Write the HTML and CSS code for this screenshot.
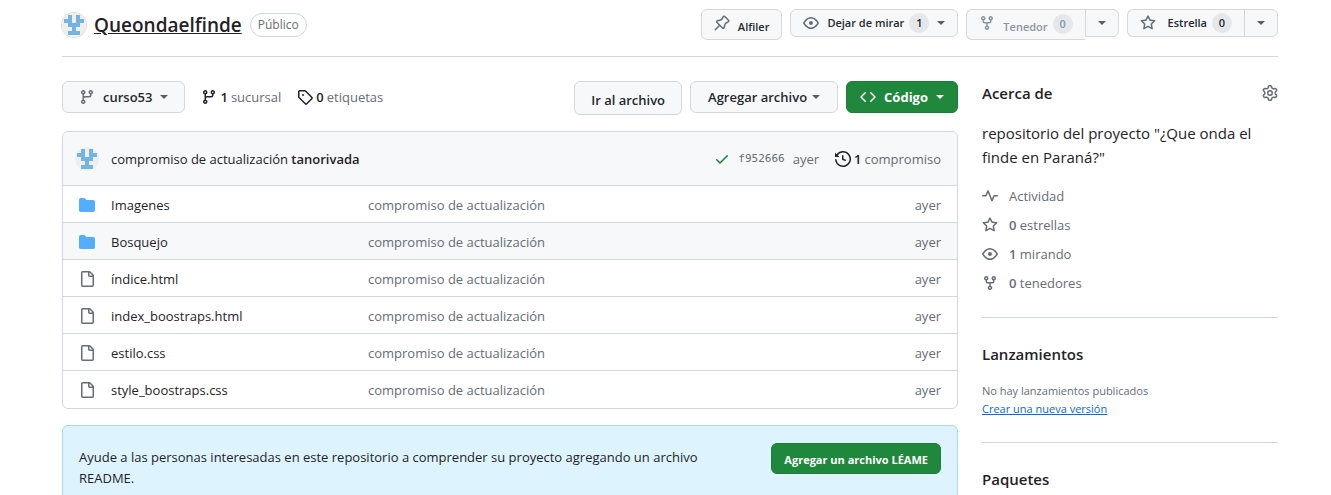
FILE: index.html
```html
<!DOCTYPE html>
<html lang="es">
<head>
<meta charset="utf-8">
<title>Queondaelfinde</title>
<link rel="stylesheet" href="styles.css">
</head>
<body>
<svg class="sprite" aria-hidden="true">
  <symbol id="fork" viewBox="0 0 16 16"><path d="M5 5.372v.878c0 .414.336.75.75.75h4.5a.75.75 0 0 0 .75-.75v-.878a2.25 2.25 0 1 1 1.5 0v.878a2.25 2.25 0 0 1-2.25 2.25h-1.5v2.128a2.251 2.251 0 1 1-1.5 0V8.5h-1.5A2.25 2.25 0 0 1 3.5 6.25v-.878a2.25 2.25 0 1 1 1.5 0ZM5 3.25a.75.75 0 1 0-1.5 0 .75.75 0 0 0 1.5 0Zm6.75.75a.75.75 0 1 0 0-1.5.75.75 0 0 0 0 1.5Zm-3 8.75a.75.75 0 1 0-1.5 0 .75.75 0 0 0 1.5 0Z"/></symbol>
  <symbol id="branch" viewBox="0 0 16 16"><path d="M9.5 3.25a2.25 2.25 0 1 1 3 2.122V6A2.5 2.5 0 0 1 10 8.5H6a1 1 0 0 0-1 1v1.128a2.251 2.251 0 1 1-1.5 0V5.372a2.25 2.25 0 1 1 1.5 0v1.836A2.493 2.493 0 0 1 6 7h4a1 1 0 0 0 1-1v-.628A2.25 2.25 0 0 1 9.5 3.25Zm-6 0a.75.75 0 1 0 1.5 0 .75.75 0 0 0-1.5 0Zm8.25-.75a.75.75 0 1 0 0 1.5.75.75 0 0 0 0-1.5ZM4.25 12a.75.75 0 1 0 0 1.5.75.75 0 0 0 0-1.5Z"/></symbol>
  <symbol id="tag" viewBox="0 0 16 16"><path d="M1 7.775V2.75C1 1.784 1.784 1 2.75 1h5.025c.464 0 .91.184 1.238.513l6.25 6.25a1.75 1.75 0 0 1 0 2.474l-5.026 5.026a1.75 1.75 0 0 1-2.474 0l-6.25-6.25A1.752 1.752 0 0 1 1 7.775Zm1.5 0c0 .066.026.13.073.177l6.25 6.25a.25.25 0 0 0 .354 0l5.025-5.025a.25.25 0 0 0 0-.354l-6.25-6.25a.25.25 0 0 0-.177-.073H2.75a.25.25 0 0 0-.25.25ZM6 5a1 1 0 1 1 0 2 1 1 0 0 1 0-2Z"/></symbol>
  <symbol id="eye" viewBox="0 0 16 16"><path d="M8 2c1.981 0 3.671.992 4.933 2.078 1.27 1.091 2.187 2.345 2.637 3.023a1.62 1.62 0 0 1 0 1.798c-.45.678-1.367 1.932-2.637 3.023C11.67 13.008 9.981 14 8 14c-1.981 0-3.671-.992-4.933-2.078C1.797 10.83.88 9.576.43 8.898a1.62 1.62 0 0 1 0-1.798c.45-.677 1.367-1.931 2.637-3.022C4.33 2.992 6.019 2 8 2ZM1.679 7.932a.12.12 0 0 0 0 .136c.411.622 1.241 1.75 2.366 2.717C5.176 11.758 6.527 12.5 8 12.5c1.473 0 2.825-.742 3.955-1.715 1.124-.967 1.954-2.096 2.366-2.717a.12.12 0 0 0 0-.136c-.412-.621-1.242-1.75-2.366-2.717C10.824 4.242 9.473 3.5 8 3.5c-1.473 0-2.825.742-3.955 1.715-1.124.967-1.954 2.096-2.366 2.717ZM8 10a2 2 0 1 1-.001-3.999A2 2 0 0 1 8 10Z"/></symbol>
  <symbol id="star" viewBox="0 0 16 16"><path d="M8 .25a.75.75 0 0 1 .673.418l1.882 3.815 4.21.612a.75.75 0 0 1 .416 1.279l-3.046 2.97.719 4.192a.751.751 0 0 1-1.088.791L8 12.347l-3.766 1.98a.75.75 0 0 1-1.088-.79l.72-4.194L.818 6.374a.75.75 0 0 1 .416-1.28l4.21-.611L7.327.668A.75.75 0 0 1 8 .25Zm0 2.445L6.615 5.5a.75.75 0 0 1-.564.41l-3.097.45 2.24 2.184a.75.75 0 0 1 .216.664l-.528 3.084 2.769-1.456a.75.75 0 0 1 .698 0l2.77 1.456-.53-3.084a.75.75 0 0 1 .216-.664l2.24-2.183-3.096-.45a.75.75 0 0 1-.564-.41L8 2.694Z"/></symbol>
  <symbol id="pin" viewBox="0 0 16 16"><path d="m11.294.984 3.722 3.722a1.75 1.75 0 0 1-.504 2.826l-1.327.613a3.089 3.089 0 0 0-1.707 2.084l-.584 2.454c-.317 1.332-1.972 1.8-2.94.832L5.75 11.311 1.78 15.28a.749.749 0 1 1-1.06-1.06l3.969-3.97-2.204-2.204c-.968-.968-.5-2.623.832-2.94l2.454-.584a3.08 3.08 0 0 0 2.084-1.707l.613-1.327a1.75 1.75 0 0 1 2.826-.504ZM6.283 9.723l2.732 2.731a.25.25 0 0 0 .42-.119l.584-2.454a4.586 4.586 0 0 1 2.537-3.098l1.328-.613a.25.25 0 0 0 .072-.404l-3.722-3.722a.25.25 0 0 0-.404.072l-.613 1.328a4.584 4.584 0 0 1-3.098 2.537l-2.454.584a.25.25 0 0 0-.119.42l2.731 2.732Z"/></symbol>
  <symbol id="code" viewBox="0 0 16 16"><path d="m11.28 3.22 4.25 4.25a.75.75 0 0 1 0 1.06l-4.25 4.25a.749.749 0 0 1-1.275-.326.749.749 0 0 1 .215-.734L13.94 8l-3.72-3.72a.749.749 0 0 1 .326-1.275.749.749 0 0 1 .734.215Zm-6.56 0a.751.751 0 0 1 1.042.018.751.751 0 0 1 .018 1.042L2.06 8l3.72 3.72a.749.749 0 0 1-.326 1.275.749.749 0 0 1-.734-.215L.47 8.53a.75.75 0 0 1 0-1.06Z"/></symbol>
  <symbol id="history" viewBox="0 0 16 16"><path d="m.427 1.927 1.215 1.215a8.002 8.002 0 1 1-1.6 5.685.75.75 0 1 1 1.493-.154 6.5 6.5 0 1 0 1.18-4.458l1.358 1.358A.25.25 0 0 1 3.896 6H.25A.25.25 0 0 1 0 5.75V2.104a.25.25 0 0 1 .427-.177ZM7.75 4a.75.75 0 0 1 .75.75v2.992l2.028.812a.75.75 0 0 1-.557 1.392l-2.5-1A.751.751 0 0 1 7 8.25v-3.5A.75.75 0 0 1 7.75 4Z"/></symbol>
  <symbol id="check" viewBox="0 0 16 16"><path d="M13.78 4.22a.75.75 0 0 1 0 1.06l-7.25 7.25a.75.75 0 0 1-1.06 0L2.22 9.28a.751.751 0 0 1 .018-1.042.751.751 0 0 1 1.042-.018L6 10.94l6.72-6.72a.75.75 0 0 1 1.06 0Z"/></symbol>
  <symbol id="folder" viewBox="0 0 16 16"><path d="M1.75 1A1.75 1.75 0 0 0 0 2.75v10.5C0 14.216.784 15 1.75 15h12.5A1.75 1.75 0 0 0 16 13.25v-8.5A1.75 1.75 0 0 0 14.25 3H7.5a.25.25 0 0 1-.2-.1l-.9-1.2C6.07 1.26 5.55 1 5 1H1.75Z"/></symbol>
  <symbol id="file" viewBox="0 0 16 16"><path d="M2 1.75C2 .784 2.784 0 3.75 0h6.586c.464 0 .909.184 1.237.513l2.914 2.914c.329.328.513.773.513 1.237v9.586A1.75 1.75 0 0 1 13.25 16h-9.5A1.75 1.75 0 0 1 2 14.25Zm1.75-.25a.25.25 0 0 0-.25.25v12.5c0 .138.112.25.25.25h9.5a.25.25 0 0 0 .25-.25V6h-2.75A1.75 1.75 0 0 1 9 4.25V1.5Zm6.75.062V4.25c0 .138.112.25.25.25h2.688l-.011-.013-2.914-2.914-.013-.011Z"/></symbol>
  <symbol id="pulse" viewBox="0 0 16 16"><path d="M6 2c.306 0 .582.187.696.471L10 10.731l1.304-3.26A.751.751 0 0 1 12 7h3.25a.75.75 0 0 1 0 1.5h-2.742l-1.812 4.528a.751.751 0 0 1-1.392 0L6 4.77 4.696 8.03A.75.75 0 0 1 4 8.5H.75a.75.75 0 0 1 0-1.5h2.742l1.812-4.529A.751.751 0 0 1 6 2Z"/></symbol>
  <symbol id="gear" viewBox="0 0 16 16"><path d="M8 0a8.2 8.2 0 0 1 .701.031C9.444.095 9.99.645 10.16 1.29l.288 1.107c.018.066.079.158.212.224.231.114.454.243.668.386.123.082.233.09.299.071l1.103-.303c.644-.176 1.392.021 1.82.63.27.385.506.792.704 1.218.315.675.111 1.422-.364 1.891l-.814.806c-.049.048-.098.147-.088.294.016.257.016.515 0 .772-.01.147.038.246.088.294l.814.806c.475.469.679 1.216.364 1.891a7.977 7.977 0 0 1-.704 1.217c-.428.61-1.176.807-1.82.63l-1.102-.302c-.067-.019-.177-.011-.3.071a5.909 5.909 0 0 1-.668.386c-.133.066-.194.158-.211.224l-.29 1.106c-.168.646-.715 1.196-1.458 1.26a8.006 8.006 0 0 1-1.402 0c-.743-.064-1.289-.614-1.458-1.26l-.289-1.106c-.018-.066-.079-.158-.212-.224a5.738 5.738 0 0 1-.668-.386c-.123-.082-.233-.09-.299-.071l-1.103.303c-.644.176-1.392-.021-1.82-.63a8.12 8.12 0 0 1-.704-1.218c-.315-.675-.111-1.422.363-1.891l.815-.806c.05-.048.098-.147.088-.294a6.214 6.214 0 0 1 0-.772c.01-.147-.038-.246-.088-.294l-.815-.806C.635 6.045.431 5.298.746 4.623a7.92 7.92 0 0 1 .704-1.217c.428-.61 1.176-.807 1.82-.63l1.102.302c.067.019.177.011.3-.071.214-.143.437-.272.668-.386.133-.066.194-.158.211-.224l.29-1.106C6.009.645 6.556.095 7.299.03 7.53.01 7.764 0 8 0Zm-.571 1.525c-.036.003-.108.036-.137.146l-.289 1.105c-.147.561-.549.967-.998 1.189-.173.086-.34.183-.5.29-.417.278-.97.423-1.529.27l-1.103-.303c-.109-.03-.175.016-.195.045-.22.312-.412.644-.573.99-.014.031-.021.11.059.19l.815.806c.411.406.562.957.53 1.456a4.709 4.709 0 0 0 0 .582c.032.499-.119 1.05-.53 1.456l-.815.806c-.081.08-.073.159-.059.19.162.346.353.677.573.989.02.03.085.076.195.046l1.102-.303c.56-.153 1.113-.008 1.53.27.161.107.328.204.501.29.447.222.85.629.997 1.189l.289 1.105c.029.109.101.143.137.146a6.6 6.6 0 0 0 1.142 0c.036-.003.108-.036.137-.146l.289-1.105c.147-.561.549-.967.998-1.189.173-.086.34-.183.5-.29.417-.278.97-.423 1.529-.27l1.103.303c.109.029.175-.016.195-.045.22-.313.411-.644.573-.99.014-.031.021-.11-.059-.19l-.815-.806c-.411-.406-.562-.957-.53-1.456a4.709 4.709 0 0 0 0-.582c-.032-.499.119-1.05.53-1.456l.815-.806c.081-.08.073-.159.059-.19a6.464 6.464 0 0 0-.573-.989c-.02-.03-.085-.076-.195-.046l-1.102.303c-.56.153-1.113.008-1.53-.27a4.44 4.44 0 0 0-.501-.29c-.447-.222-.85-.629-.997-1.189l-.289-1.105c-.029-.11-.101-.143-.137-.146a6.6 6.6 0 0 0-1.142 0ZM11 8a3 3 0 1 1-6 0 3 3 0 0 1 6 0ZM9.5 8a1.5 1.5 0 1 0-3.001.001A1.5 1.5 0 0 0 9.5 8Z"/></symbol>
  <symbol id="avatar" viewBox="0 0 24 24"><circle cx="12" cy="12" r="12" fill="#efefef"/><path fill="#73b5e0" d="M6 2h4v8h4V2h4v4h4v4h-4v4h-4v4h4v4H6v-4h4v-4H6v-4H2V6h4z"/></symbol>
</svg>

<header class="repo-head">
  <div class="repo-title">
    <svg class="avatar-large"><use href="#avatar"/></svg>
    <a class="repo-name" href="#">Queondaelfinde</a>
    <span class="label">Público</span>
  </div>
  <div class="actions">
    <button class="btn small tall"><svg class="icon"><use href="#pin"/></svg><span class="text">Alfiler</span></button>
    <button class="btn small"><svg class="icon"><use href="#eye"/></svg><span>Dejar de mirar</span><span class="counter">1</span><span class="caret"></span></button>
    <div class="split">
      <button class="btn small tall faded" disabled><svg class="icon"><use href="#fork"/></svg><span class="text">Tenedor</span><span class="counter">0</span></button>
      <button class="btn small drop" aria-label="Ver bifurcaciones"><span class="caret"></span></button>
    </div>
    <div class="split">
      <button class="btn small star-btn"><svg class="icon"><use href="#star"/></svg><span>Estrella</span><span class="counter">0</span></button>
      <button class="btn small drop" aria-label="Listas"><span class="caret"></span></button>
    </div>
  </div>
</header>

<div class="layout">
  <main class="main">
    <div class="toolbar">
      <button class="btn"><svg class="icon"><use href="#branch"/></svg><span>curso53</span><span class="caret"></span></button>
      <a class="stat" href="#"><svg class="icon"><use href="#branch"/></svg><strong>1</strong> <span>sucursal</span></a>
      <a class="stat" href="#"><svg class="icon"><use href="#tag"/></svg><strong>0</strong> <span>etiquetas</span></a>
      <div class="toolbar-end">
        <button class="btn low">Ir al archivo</button>
        <button class="btn add"><span>Agregar archivo</span><span class="caret"></span></button>
        <button class="btn primary code-btn"><svg class="icon"><use href="#code"/></svg><span>Código</span><span class="caret"></span></button>
      </div>
    </div>

    <section class="files">
      <div class="commit">
        <svg class="avatar"><use href="#avatar"/></svg>
        <span class="commit-text">compromiso de actualización <a class="author" href="#">tanorivada</a></span>
        <svg class="icon check"><use href="#check"/></svg>
        <a class="sha" href="#">f952666</a>
        <a class="when" href="#">ayer</a>
        <a class="commits" href="#"><svg class="icon"><use href="#history"/></svg><strong>1</strong> <span>compromiso</span></a>
      </div>
      <table class="table">
        <tbody>
          <tr><td class="c-icon"><svg class="icon folder"><use href="#folder"/></svg></td><td class="c-name"><a href="#">Imagenes</a></td><td>compromiso de actualización</td><td class="c-age">ayer</td></tr>
          <tr class="hover"><td class="c-icon"><svg class="icon folder"><use href="#folder"/></svg></td><td class="c-name"><a href="#">Bosquejo</a></td><td>compromiso de actualización</td><td class="c-age">ayer</td></tr>
          <tr><td class="c-icon"><svg class="icon"><use href="#file"/></svg></td><td class="c-name"><a href="#">índice.html</a></td><td>compromiso de actualización</td><td class="c-age">ayer</td></tr>
          <tr><td class="c-icon"><svg class="icon"><use href="#file"/></svg></td><td class="c-name"><a href="#">index_boostraps.html</a></td><td>compromiso de actualización</td><td class="c-age">ayer</td></tr>
          <tr><td class="c-icon"><svg class="icon"><use href="#file"/></svg></td><td class="c-name"><a href="#">estilo.css</a></td><td>compromiso de actualización</td><td class="c-age">ayer</td></tr>
          <tr><td class="c-icon"><svg class="icon"><use href="#file"/></svg></td><td class="c-name"><a href="#">style_boostraps.css</a></td><td>compromiso de actualización</td><td class="c-age">ayer</td></tr>
        </tbody>
      </table>
    </section>

    <section class="notice">
      <p class="notice-text">Ayude a las personas interesadas en este repositorio a comprender su proyecto agregando un archivo README.</p>
      <button class="btn small primary notice-btn">Agregar un archivo LÉAME</button>
    </section>
  </main>

  <aside class="side">
    <section class="block">
      <div class="side-head"><h2>Acerca de</h2><svg class="icon"><use href="#gear"/></svg></div>
      <p class="about">repositorio del proyecto "¿Que onda el finde en Paraná?"</p>
      <ul class="facts">
        <li><a href="#"><svg class="icon"><use href="#pulse"/></svg><span>Actividad</span></a></li>
        <li><a href="#"><svg class="icon"><use href="#star"/></svg><span><strong>0</strong> estrellas</span></a></li>
        <li><a href="#"><svg class="icon"><use href="#eye"/></svg><span><strong>1</strong> mirando</span></a></li>
        <li><a href="#"><svg class="icon"><use href="#fork"/></svg><span><strong>0</strong> tenedores</span></a></li>
      </ul>
    </section>
    <section class="block">
      <h2>Lanzamientos</h2>
      <p class="note">No hay lanzamientos publicados<br><a href="#">Crear una nueva versión</a></p>
    </section>
    <section class="block">
      <h2>Paquetes</h2>
    </section>
  </aside>
</div>
</body>
</html>
```
FILE: styles.css
```css
* { box-sizing: border-box; }
body {
  margin: 0;
  padding: 8px 53px 0 62px;
  background: #fff;
  color: #1f2328;
  font: 13px/20px "Open Sans", "Noto Sans", sans-serif;
}
a { color: inherit; text-decoration: none; }
p, h2, ul { margin: 0; padding: 0; }
h2 { font-size: 15px; line-height: 24px; font-weight: 600; }
strong { font-weight: 600; }
.sprite { position: absolute; width: 0; height: 0; }
.icon { width: 16px; height: 16px; flex: none; fill: currentColor; display: block; }

.repo-head {
  display: flex;
  justify-content: space-between;
  align-items: flex-start;
  height: 49px;
  border-bottom: 1px solid #d0d7de;
}
.repo-title { display: flex; align-items: center; gap: 8px; padding-top: 2px; }
.avatar-large { width: 24px; height: 24px; border-radius: 50%; box-shadow: 0 0 0 1px #dcdfe2; }
.repo-name { font-size: 19px; line-height: 30px; font-weight: 600; text-decoration: underline; }
.label {
  padding: 0 7px;
  border: 1px solid #d0d7de;
  border-radius: 12px;
  color: #656d76;
  font-size: 12px;
  line-height: 22px;
  font-weight: 500;
}
.actions { display: flex; align-items: flex-start; gap: 8px; padding-top: 1px; }
.btn {
  display: inline-flex;
  align-items: center;
  justify-content: center;
  gap: 8px;
  height: 32px;
  padding: 0 16px;
  border: 1px solid #d5d8da;
  border-radius: 6px;
  background: #f6f8fa;
  color: #24292f;
  font: 600 13px/20px "Open Sans", "Noto Sans", sans-serif;
  white-space: nowrap;
}
.btn .icon { color: #656d76; }
.small { height: 28px; padding: 0 12px; font-size: 11px; }
.tall { height: 31px; align-items: flex-start; padding-top: 4px; }
.tall .icon { margin-top: 1px; }
.tall .text { padding-top: 3px; }
.faded { color: #8c959f; }
.btn.faded .icon, .faded .counter { color: #8c959f; }
.caret { border: 4px solid transparent; border-top-color: #57606a; border-bottom: 0; }
.counter {
  min-width: 20px;
  margin-left: -3px;
  padding: 0 6px;
  border-radius: 10px;
  background: #e4e8eb;
  text-align: center;
}
.split { display: flex; align-items: flex-start; }
.split .btn:first-child { border-radius: 6px 0 0 6px; border-right: 0; }
.split .drop { border-radius: 0 6px 6px 0; }
.star-btn .icon { margin-right: 4px; }
.primary { background: #1f883d; border-color: #1d7c38; color: #fff; font-weight: 700; }
.primary .icon { color: #fff; }
.primary .caret { border-top-color: #fff; }

.layout { display: grid; grid-template-columns: minmax(0, 1fr) 296px; gap: 24px; padding-top: 24px; }
.toolbar { display: flex; align-items: flex-start; gap: 16px; }
.stat { display: flex; align-items: center; gap: 3px; line-height: 32px; }
.stat span, .commits span { color: #656d76; }
.toolbar-end { display: flex; align-items: flex-start; gap: 8px; margin-left: auto; }
.low { height: 34px; padding-top: 4px; }
.add { gap: 5px; padding: 0 17px; }
.code-btn { padding: 0 13px; }

.files { margin-top: 16px; border: 1px solid #d0d7de; border-radius: 6px; overflow: hidden; }
.commit { display: flex; align-items: center; height: 53px; padding: 0 16px 0 12px; background: #f6f8fa; }
.avatar { width: 24px; height: 24px; margin-right: 12px; }
.commit-text { margin-right: auto; }
.author { font-weight: 600; }
.check { color: #1a7f37; margin-right: 8px; }
.sha { font: 11px/20px "DejaVu Sans Mono", "Liberation Mono", monospace; color: #656d76; margin-right: 8px; }
.when { color: #656d76; margin-right: 16px; }
.commits { display: flex; align-items: center; gap: 3px; }
.table { width: 100%; border-collapse: collapse; table-layout: fixed; color: #656d76; }
.table td { height: 37px; padding: 2px 0 0; border-top: 1px solid #d0d7de; }
.table .c-icon { width: 48px; padding-left: 16px; }
.table .c-name { width: 257px; color: #1f2328; }
.table .c-age { width: 96px; padding-right: 16px; text-align: right; }
.icon.folder { color: #54aeff; }
.hover { background: #f6f8fa; }

.notice {
  display: flex;
  align-items: flex-start;
  justify-content: space-between;
  gap: 32px;
  margin-top: 16px;
  padding: 17px 16px;
  border: 1px solid #a9d8fb;
  border-radius: 6px;
  background: #ddf4ff;
}
.notice-text { padding-top: 4px; line-height: 21px; }
.notice-btn { height: 31px; flex: none; padding-top: 4px; }

.block { padding-bottom: 24px; }
.block + .block { padding-top: 24px; border-top: 1px solid #d0d7de; }
.side-head { display: flex; align-items: center; justify-content: space-between; }
.side-head .icon { color: #656d76; }
.about { margin: 16px 0 17px; font-size: 15px; line-height: 24px; }
.facts { list-style: none; display: grid; gap: 9px; color: #656d76; }
.facts a { display: flex; align-items: center; gap: 11px; }
.note { margin-top: 16px; color: #656d76; font-size: 11px; line-height: 18px; }
.note a { color: #0969da; text-decoration: underline; }
```
